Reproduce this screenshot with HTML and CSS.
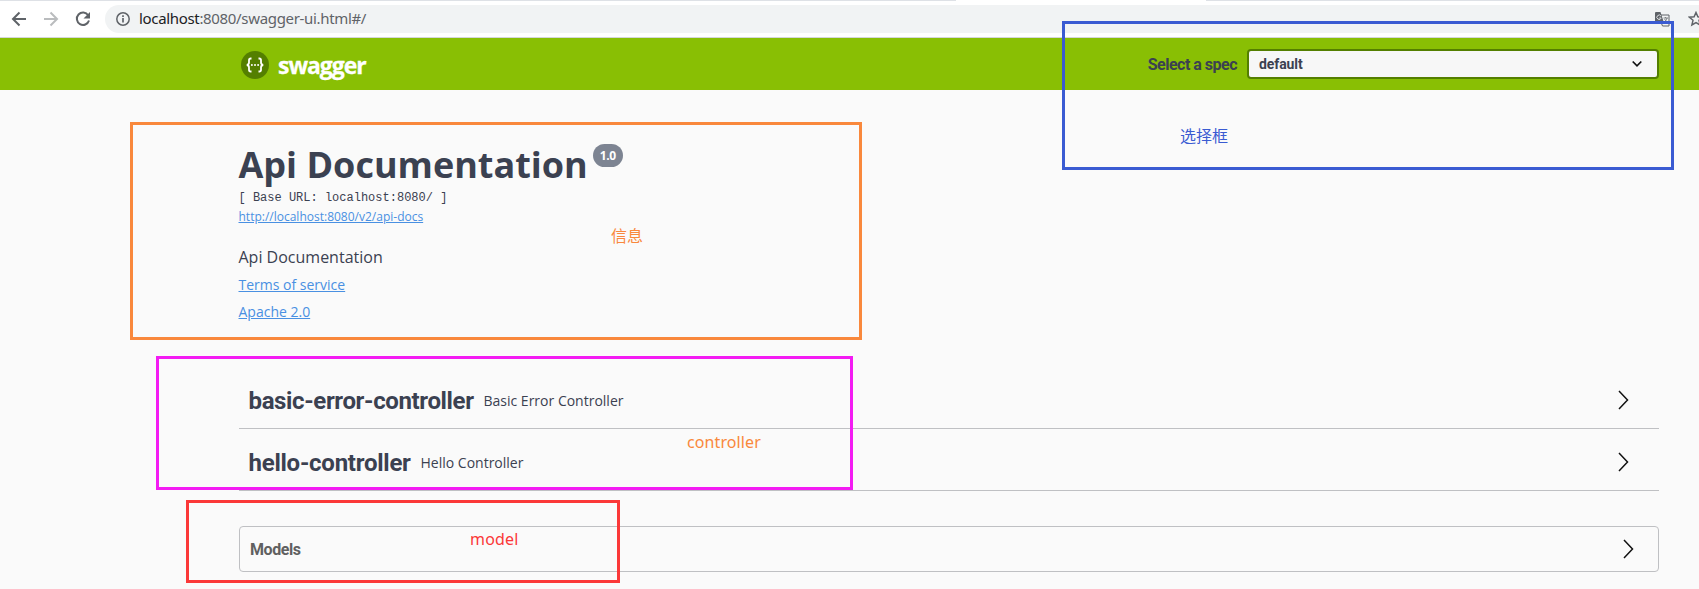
FILE: index.html
```html
<!DOCTYPE html>
<html lang="en">
<head>
<meta charset="utf-8">
<title>Swagger UI</title>
<link rel="stylesheet" href="styles.css">
</head>
<body>
<div class="browser">
  <div class="tabs"><span class="tab-left"></span><span class="tab-right"></span></div>
  <div class="toolbar">
    <svg class="nav" width="16" height="16" viewBox="0 0 16 16"><path d="M15 8H2.500M8.500 1.500L2 8l6.500 6.500" fill="none" stroke="#5f6368" stroke-width="2"/></svg>
    <svg class="nav" width="16" height="16" viewBox="0 0 16 16"><path d="M1 8h12.500M7.500 1.500L14 8l-6.500 6.500" fill="none" stroke="#babcbe" stroke-width="2"/></svg>
    <svg class="nav" width="16" height="16" viewBox="0 0 16 16"><path d="M13.200 4.200A6.200 6.200 0 1 0 14 9.500" fill="none" stroke="#5f6368" stroke-width="2"/><path d="M15 1v6.500H8.500z" fill="#5f6368"/></svg>
    <div class="address">
      <svg width="14" height="14" viewBox="0 0 14 14"><circle cx="7" cy="7" r="6.200" fill="none" stroke="#5f6368" stroke-width="1.500"/><path d="M7 6v4.500M7 3.300v1.700" stroke="#5f6368" stroke-width="1.700"/></svg>
      <span class="url"><b>localhost</b>:8080/swagger-ui.html#/</span>
      <svg class="translate" width="15" height="15" viewBox="0 0 15 15"><path d="M5.500 3h8.500v11H7.500L5.500 9" fill="none" stroke="#5f6368"/><path d="M1 0h4.500l3.500 11H1a1 1 0 0 1-1-1V1a1 1 0 0 1 1-1z" fill="#5f6368"/><path d="M6 4.100A2.200 2.200 0 1 0 6.200 6H4.200" fill="none" stroke="#dfe0e2"/><path d="M8.500 6h4.500M10.500 5v1M12 6c-.3 2-1.500 3-2.500 3.500M9.500 7l3 3.500" fill="none" stroke="#7b7f83"/></svg>
      <svg class="star" width="16" height="16" viewBox="0 0 16 16"><path d="M8 1.500l1.900 4.300 4.700.4-3.600 3.100 1.100 4.600L8 11.500l-4.100 2.400L5 9.300 1.400 6.200l4.700-.4z" fill="none" stroke="#5f6368" stroke-width="1.500"/></svg>
    </div>
  </div>
</div>
<header class="topbar">
  <div class="logo">
    <svg width="28" height="28" viewBox="0 0 28 28"><circle cx="14" cy="14" r="14" fill="#547f00"/><path d="M10.500 7.500H9.700q-1.700 0-1.700 1.800v2.200q0 2.200-2.200 2.500 2.200.3 2.200 2.500v2.200q0 1.800 1.700 1.800h.8M17.500 7.500h.8q1.700 0 1.700 1.800v2.200q0 2.200 2.200 2.500-2.200.3-2.200 2.500v2.200q0 1.800-1.700 1.800h-.8" fill="none" stroke="#fff" stroke-width="1.800"/><circle cx="10.900" cy="14" r="1" fill="#fff"/><circle cx="14" cy="14" r="1" fill="#fff"/><circle cx="17.100" cy="14" r="1" fill="#fff"/></svg>
    <span class="brand">swagger</span>
  </div>
  <div class="spec">
    <span class="spec-label">Select a spec</span>
    <div class="select"><span class="spec-value">default</span><svg width="12" height="8" viewBox="0 0 12 8"><path d="M1.700 1.500L6 5.800l4.300-4.300" fill="none" stroke="#111" stroke-width="1.700"/></svg></div>
  </div>
</header>
<main class="content">
  <section class="info">
    <h1>Api Documentation<span class="version">1.0</span></h1>
    <div class="base">[ Base URL: localhost:8080/ ]</div>
    <a class="docs">http://localhost:8080/v2/api-docs</a>
    <p>Api Documentation</p>
    <a class="link">Terms of service</a>
    <a class="link">Apache 2.0</a>
  </section>
  <section class="tags">
    <div class="tag"><span class="name name-basic">basic-error-controller</span><small>Basic Error Controller</small><svg width="12" height="20" viewBox="0 0 12 20"><path d="M1 1l8.500 9L1 19" fill="none" stroke="#111" stroke-width="1.500"/></svg></div>
    <div class="tag"><span class="name name-hello">hello-controller</span><small>Hello Controller</small><svg width="12" height="20" viewBox="0 0 12 20"><path d="M1 1l8.500 9L1 19" fill="none" stroke="#111" stroke-width="1.500"/></svg></div>
  </section>
  <section class="models"><span>Models</span><svg width="12" height="20" viewBox="0 0 12 20"><path d="M1 1l8.500 9L1 19" fill="none" stroke="#111" stroke-width="1.500"/></svg></section>
</main>
<div class="note note-select"><span>选择框</span></div>
<div class="note note-info"><span>信息</span></div>
<div class="note note-controller"><span>controller</span></div>
<div class="note note-model"><span>model</span></div>
</body>
</html>
```
FILE: styles.css
```css
* { box-sizing: border-box; }
body { margin: 0; width: 1699px; height: 589px; overflow: hidden; position: relative; background: #fafafa; color: #3b4151; font-family: "Open Sans", sans-serif; }
svg { display: block; flex: none; }
.browser { height: 38px; background: #fff; border-bottom: 1px solid #d5d7d9; }
.tabs { height: 1px; display: flex; justify-content: space-between; }
.tabs span { background: #dee1e6; }
.tab-left { width: 956px; }
.tab-right { width: 493px; }
.toolbar { display: flex; align-items: center; height: 36px; padding: 0 0 0 11px; }
.nav { margin-right: 16px; }
.address { flex: 1; display: flex; align-items: center; height: 28px; margin-left: -2px; background: #f1f3f4; border-radius: 14px 0 0 14px; padding-left: 11px; overflow: hidden; }
.url { margin: -2px 0 0 9px; font: 15px/20px "Noto Sans", sans-serif; letter-spacing: -.33px; color: #5f6368; white-space: nowrap; }
.url b { font-weight: 400; color: #202124; }
.translate { margin-left: auto; }
.star { margin: 0 -5px 0 18px; }
.topbar { height: 52px; background: #89bf04; display: flex; align-items: center; justify-content: space-between; padding: 0 40px 0 241px; }
.logo { display: flex; align-items: center; gap: 9px; padding-top: 2px; }
.brand { font: 700 23px/26px "Open Sans", sans-serif; color: #fff; display: block; width: 90px; letter-spacing: -1.05px; margin-top: -1px; -webkit-text-stroke: .3px #fff; }
.spec { display: flex; align-items: center; gap: 10px; }
.spec-label { font: 700 16px/20px Roboto, sans-serif; letter-spacing: -.5px; padding-top: 2px; }
.select { width: 412px; height: 30px; border: 2px solid #547f00; border-radius: 4px; background: #f7f7f7; display: flex; align-items: center; justify-content: space-between; padding: 0 14px 0 10px; }
.spec-value { font: 700 14px/20px Roboto, sans-serif; letter-spacing: -.1px; }
.content { padding: 52px 40px 0 239px; }
.info { height: 225px; display: flex; flex-direction: column; align-items: flex-start; padding-top: 1px; margin-left: -.5px; }
h1 { margin: 0; font: 700 36px/44px "Open Sans", sans-serif; display: flex; align-items: flex-start; white-space: nowrap; }
.version { margin: 1px 0 0 5px; width: 30px; height: 23px; border-radius: 12px; background: #7d8492; color: #fff; font: 700 12px/23px "Open Sans", sans-serif; letter-spacing: -.3px; text-align: center; }
.base { margin-top: 2px; font: 12px/18px "Liberation Mono", monospace; }
a { color: #4990e2; text-decoration: underline; }
.docs { font-size: 12px; line-height: 20px; }
.info p { margin: 18px 0 6px; font-size: 16px; line-height: 24px; }
.link { font-size: 14px; line-height: 20px; margin-bottom: 7px; }
.tag { height: 62px; border-bottom: 1px solid #bfc0c3; display: flex; align-items: center; padding: 4px 29px 0 9.5px; }
.tag svg { margin-left: auto; }
.name { font: 700 24px/30px Roboto, sans-serif; white-space: nowrap; padding-top: 2px; }
.name-basic { width: 225px; letter-spacing: -.36px; }
.name-hello { width: 162px; letter-spacing: -.25px; }
.tag small { font-size: 14px; line-height: 20px; margin-left: 10px; padding-top: 2px; }
.models { margin-top: 35px; height: 46px; border: 1px solid #bfc0c3; border-radius: 4px; display: flex; align-items: center; justify-content: space-between; padding: 0 23px 0 10px; }
.models span { font: 700 16px/20px Roboto, sans-serif; color: #606060; letter-spacing: -.45px; padding-top: 2px; }
.note { position: absolute; border: 3px solid; font: 16px/20px "Noto Sans", "Noto Sans CJK SC", sans-serif; }
.note span { display: block; white-space: nowrap; }
.note-select { left: 1062px; top: 21px; width: 612px; height: 149px; color: #3a5bd2; padding: 102px 0 0 115px; }
.note-info { left: 130px; top: 122px; width: 732px; height: 218px; color: #f9883c; padding: 101px 0 0 478px; }
.note-controller { left: 156px; top: 356px; width: 697px; height: 134px; border-color: #f31bf3; color: #f9883c; padding: 73px 0 0 528px; letter-spacing: .1px; }
.note-model { left: 186px; top: 500px; width: 434px; height: 83px; color: #fb3838; padding: 26px 0 0 281px; letter-spacing: .2px; }
```
